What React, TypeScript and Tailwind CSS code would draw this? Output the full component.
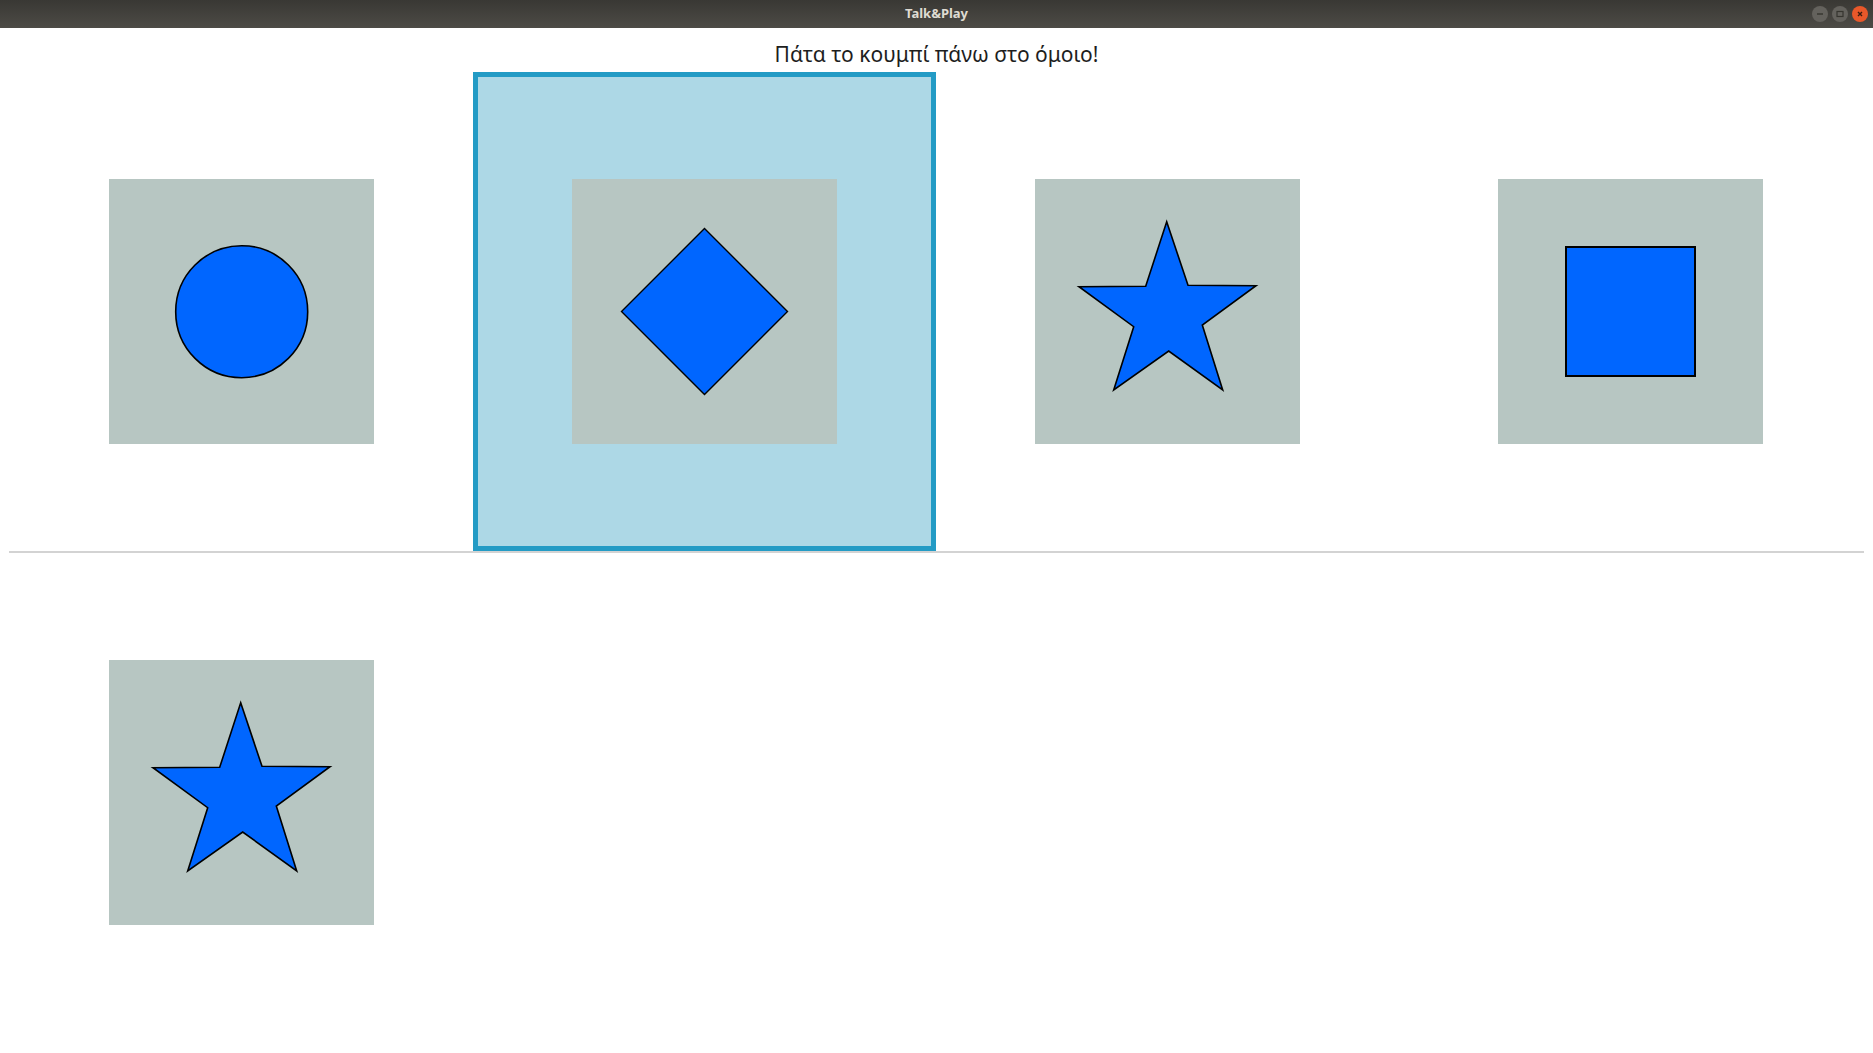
import type { ReactNode } from "react";

const FILL = "#0066ff";

function Tile({ children }: { children: ReactNode }) {
  return (
    <div className="h-[265px] w-[265px] bg-[#b7c6c2]">
      <svg width="265" height="265" viewBox="0 0 265 265">
        {children}
      </svg>
    </div>
  );
}

function Circle() {
  return (
    <Tile>
      <circle cx="132.7" cy="132.7" r="66" fill={FILL} stroke="#000" strokeWidth="1.6" />
    </Tile>
  );
}

function Diamond() {
  return (
    <Tile>
      <polygon
        points="132.5,49.5 215.5,132.5 132.5,215.5 49.5,132.5"
        fill={FILL}
        stroke="#000"
        strokeWidth="1.4"
      />
    </Tile>
  );
}

function Star() {
  return (
    <Tile>
      <polygon
        points="131.7,42.7 153,106.3 221,106.7 167.3,146 187.7,211 133.7,172 78.7,211 98.7,147.7 44,107.7 110.7,107.3"
        fill={FILL}
        stroke="#000"
        strokeWidth="1.6"
        strokeLinejoin="miter"
      />
    </Tile>
  );
}

function Square() {
  return (
    <Tile>
      <rect x="68" y="68" width="129" height="129" fill={FILL} stroke="#000" strokeWidth="2" />
    </Tile>
  );
}

function Cell({ children, selected }: { children?: ReactNode; selected?: boolean }) {
  return (
    <div
      className={
        selected
          ? "flex h-[479px] items-center justify-center border-[5px] border-[#239bc5] bg-[#add8e6]"
          : "flex h-[479px] items-center justify-center"
      }
    >
      {children}
    </div>
  );
}

function WindowButton({ close, children }: { close?: boolean; children: ReactNode }) {
  return (
    <div
      className={
        close
          ? "flex h-[16px] w-[16px] items-center justify-center rounded-full bg-[#e9582a] text-[#3a1c10]"
          : "flex h-[16px] w-[16px] items-center justify-center rounded-full bg-[#64625d] text-[#36352f]"
      }
    >
      {children}
    </div>
  );
}

export default function App() {
  return (
    <div className="flex h-[1053px] w-full flex-col bg-white" style={{ fontFamily: '"Noto Sans", "DejaVu Sans", sans-serif' }}>
      <div className="relative flex h-[28px] shrink-0 items-center justify-center bg-gradient-to-b from-[#393834] to-[#4d4b46]">
        <span className="text-[13px] font-bold text-[#dfdbd2]">Talk&amp;Play</span>
        <div className="absolute right-[5px] top-[6px] flex gap-[4px]">
          <WindowButton>
            <svg width="10" height="10" viewBox="0 0 10 10">
              <line x1="2" y1="5" x2="8" y2="5" stroke="currentColor" strokeWidth="1.4" />
            </svg>
          </WindowButton>
          <WindowButton>
            <svg width="10" height="10" viewBox="0 0 10 10">
              <rect x="2" y="2.5" width="6" height="5" fill="none" stroke="currentColor" strokeWidth="1.2" />
            </svg>
          </WindowButton>
          <WindowButton close>
            <svg width="10" height="10" viewBox="0 0 10 10">
              <path d="M3 3 L7 7 M7 3 L3 7" stroke="currentColor" strokeWidth="1.4" />
            </svg>
          </WindowButton>
        </div>
      </div>

      <div className="flex h-[44px] shrink-0 items-center justify-center pt-[8px]">
        <span className="text-[21px] leading-none text-[#1e1e1e]">Πάτα το κουμπί πάνω στο όμοιο!</span>
      </div>

      <div className="px-[10px]">
        <div className="grid grid-cols-[repeat(4,463px)]">
          <Cell>
            <Circle />
          </Cell>
          <Cell selected>
            <Diamond />
          </Cell>
          <Cell>
            <Star />
          </Cell>
          <Cell>
            <Square />
          </Cell>
        </div>
      </div>

      <div className="mx-[9px] h-[2px] shrink-0 bg-[#d3d3d3]" />

      <div className="px-[10px]">
        <div className="grid grid-cols-[repeat(4,463px)]">
          <Cell>
            <Star />
          </Cell>
        </div>
      </div>
    </div>
  );
}
